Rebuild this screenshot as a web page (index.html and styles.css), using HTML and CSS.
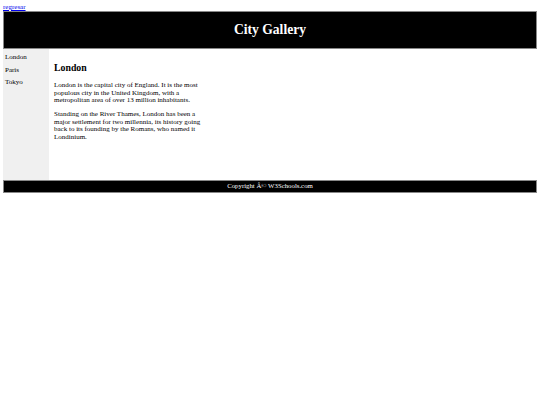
FILE: index.html
```html
<!DOCTYPE html>
<html>
<head>
<meta charset="utf-8">
<link rel="stylesheet" href="styles.css">
</head>
<body>
<a class="back" href="#">regresar</a>
<div class="container">
  <header class="header"><h1 class="title">City Gallery</h1></header>
  <div class="main">
    <nav class="nav">
      <ul class="menu">
        <li>London</li>
        <li>Paris</li>
        <li>Tokyo</li>
      </ul>
    </nav>
    <article class="article">
      <h2 class="heading">London</h2>
      <p class="para">London is the capital city of England. It is the most populous city in the United Kingdom, with a metropolitan area of over 13 million inhabitants.</p>
      <p class="para">Standing on the River Thames, London has been a major settlement for two millennia, its history going back to its founding by the Romans, who named it Londinium.</p>
    </article>
  </div>
  <footer class="footer">Copyright Â© W3Schools.com</footer>
</div>
</body>
</html>
```
FILE: styles.css
```css
html, body {
  margin: 0;
  padding: 0;
  background: #fff;
}
body {
  padding: 3px;
  font-family: "Liberation Serif", "Times New Roman", serif;
  font-size: 7px;
  color: #000;
}
.back {
  display: block;
  color: #0000ee;
  text-decoration: underline;
  font-size: 7px;
  line-height: 8px;
}
.container {
  width: 534px;
}
.header {
  background: #000;
  color: #fff;
  border: 0.5px solid #888;
  height: 36px;
  display: flex;
  align-items: center;
  justify-content: center;
}
.title {
  margin: 0;
  font-size: 13.6px;
  font-weight: bold;
}
.main {
  display: flex;
  height: 131px;
}
.nav {
  width: 46px;
  background: #f0f0f0;
  padding: 4px 2px;
  box-sizing: border-box;
}
.menu {
  list-style: none;
  margin: 0;
  padding: 0;
}
.menu li {
  height: 12.6px;
  line-height: 8px;
}
.article {
  padding: 8px 5px;
  width: 149px;
}
.heading {
  margin: 5px 0 9px;
  font-size: 9.8px;
  font-weight: bold;
}
.para {
  margin: 0 0 6.4px;
  line-height: 7.6px;
}
.footer {
  background: #000;
  color: #fff;
  border: 0.5px solid #888;
  text-align: center;
  height: 10.5px;
  line-height: 10.5px;
  font-size: 6.8px;
}
```
